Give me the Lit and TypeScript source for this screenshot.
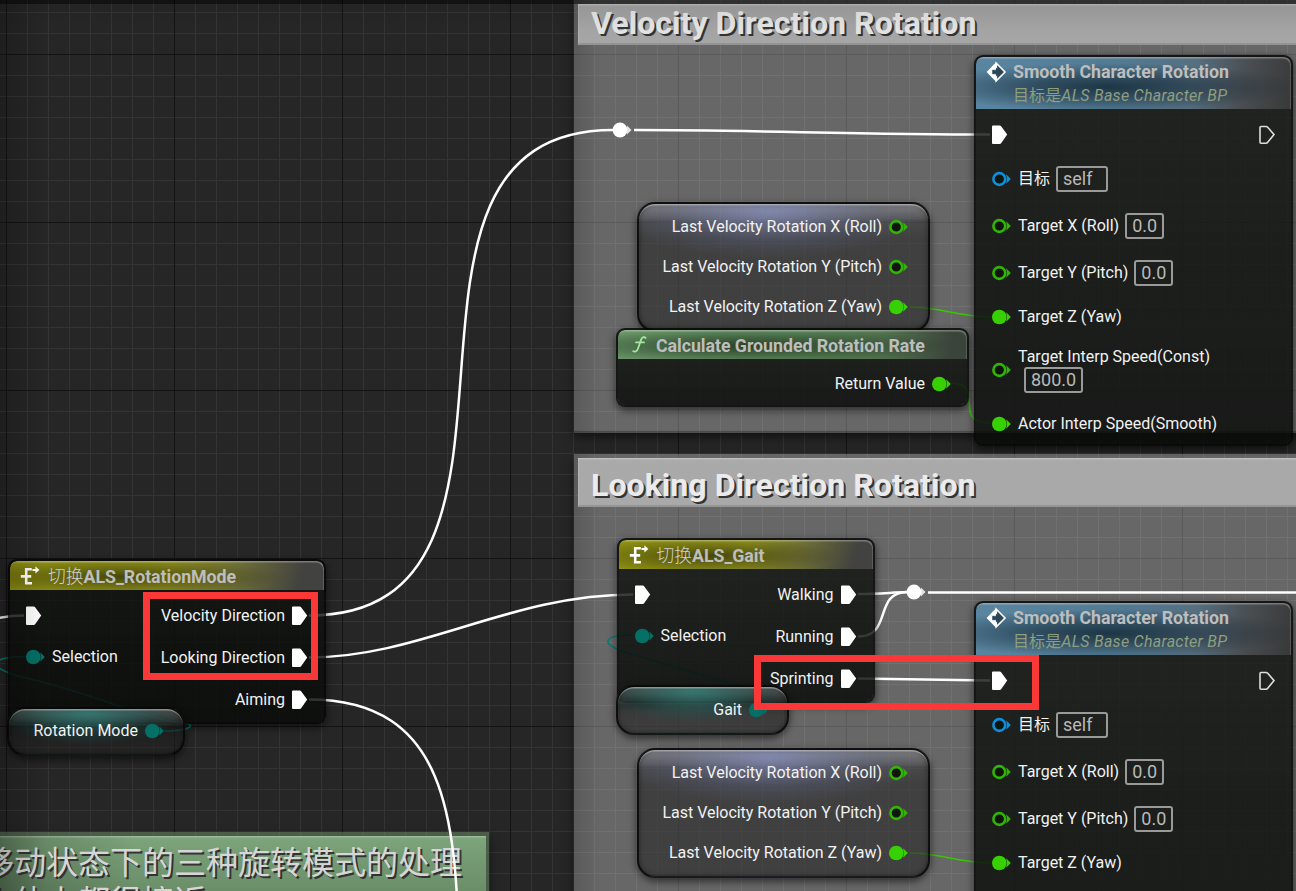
import { LitElement, html, svg, css, nothing } from "lit";
import { customElement, property } from "lit/decorators.js";
import { classMap } from "lit/directives/class-map.js";
import { styleMap } from "lit/directives/style-map.js";

type PinKind = "exec" | "float" | "object" | "enum";

interface Pin {
  kind: PinKind;
  label?: string;
  value?: string;
  wide?: boolean;
  stacked?: boolean;
  linked?: boolean;
  height: number;
}

interface NodeData {
  x: number;
  y: number;
  w: number;
  h: number;
  theme: "event" | "func" | "switch" | "rotator" | "enumvar";
  cjk?: string;
  title?: string;
  sub?: string;
  inputs: Pin[];
  outputs: Pin[];
}

const COLORS: Record<PinKind, string> = {
  exec: "#ffffff",
  float: "#37d003",
  object: "#0e8fdc",
  enum: "#046f64",
};

@customElement("bp-pin")
class BpPin extends LitElement {
  @property() kind: PinKind = "exec";
  @property({ type: Boolean }) linked = false;

  static styles = css`
    :host { display: block; flex: none; width: 19px; height: 20px; }
    svg { display: block; width: 19px; height: 20px; }
  `;

  render() {
    const c = COLORS[this.kind];
    if (this.kind === "exec") {
      return html`<svg viewBox="0 0 19 20">
        ${this.linked
          ? svg`<path d="M1 .6H7.6Q8.6 .6 9.3 1.4L15.2 9.6L9.3 18Q8.6 19 7.6 19H1Q0 19 0 18V1.6Q0 .6 1 .6Z" fill="#fff"/>`
          : svg`<path d="M2 1.5H7Q8 1.5 8.7 2.3L15 9.6L8.7 17.2Q8 18.2 7 18.2H2Q1 18.2 1 17.2V2.5Q1 1.5 2 1.5Z" fill="none" stroke="#dcdcdc" stroke-width="1.6"/>`}
      </svg>`;
    }
    const ring = this.kind === "float" ? "#31b505" : c;
    return html`<svg viewBox="0 0 19 20">
      <path d="M14.2 5.2L18.8 10L14.2 14.8Q15.6 10 14.2 5.2Z" fill=${this.linked ? c : ring}></path>
      ${this.linked
        ? svg`<circle cx="7.3" cy="10" r="7.3" fill=${c}/>`
        : svg`<circle cx="7.3" cy="10" r="5.9" fill="#101510" stroke=${ring} stroke-width="2.6"/>`}
    </svg>`;
  }
}

@customElement("bp-node")
class BpNode extends LitElement {
  @property({ attribute: false }) data!: NodeData;

  static styles = css`
    :host { display: block; }
    .node {
      box-sizing: border-box;
      height: 100%;
      border-radius: 9px;
      overflow: hidden;
      border: 2px solid rgba(5, 5, 5, 0.82);
      background: linear-gradient(rgba(16, 19, 16, 0.8), rgba(9, 11, 9, 0.84));
      background-clip: padding-box;
      color: #f2f2f2;
      font: 16px Roboto, "Noto Sans CJK SC", sans-serif;
      line-height: 20px;
      display: flex;
      flex-direction: column;
    }
    .wrap { height: 100%; border-radius: 10px; box-shadow: 0 3px 7px 1px rgba(0, 0, 0, 0.5); }
    .wrap.var { border-radius: 20px; }
    .head {
      box-sizing: border-box;
      flex: none;
      display: flex;
      align-items: flex-start;
      height: 29px;
      padding-left: 8px;
      border-radius: 7px 7px 0 0;
      box-shadow: inset -1px 2px 1px -0.5px rgba(255, 255, 255, 0.3);
      color: #bdbebd;
      font-weight: 700;
      font-size: 17.8px;
      letter-spacing: -0.05px;
      line-height: 29px;
      white-space: nowrap;
    }
    .head svg { flex: none; width: 24px; height: 24px; margin-top: 2px; }
    .event .head {
      height: 52px;
      line-height: 28px;
      padding: 1px 0 0 8px;
      background: radial-gradient(ellipse 60% 46% at 42% 58%, rgba(17, 37, 50, 0.8), rgba(17, 37, 50, 0.55) 40%, transparent),
        linear-gradient(100deg, #5a86a1 0%, #527a93 45%, #566f80 68%, #4a4f53 84%, #383838 100%);
    }
    .func .head {
      background: radial-gradient(ellipse 58% 60% at 38% 55%, rgba(20, 38, 22, 0.75), rgba(20, 38, 22, 0.4) 50%, transparent),
        linear-gradient(100deg, #6c9869 0%, #628f60 50%, #53744f 75%, #3b443b 95%);
    }
    .switch .head {
      background: radial-gradient(ellipse 52% 60% at 36% 55%, rgba(46, 46, 4, 0.75), rgba(46, 46, 4, 0.35) 50%, transparent),
        linear-gradient(105deg, #8e8f12 0%, #8f901e 50%, #6c6d38 72%, #424240 92%);
    }
    .titles { padding-left: 6px; }
    .switch .titles, .func .titles { padding-top: 0.5px; }
    .event .titles { padding-left: 5px; }
    .thin { font-weight: 300; letter-spacing: 0; color: #cfd0cf; }
    .sub {
      font-weight: 400;
      font-size: 16px;
      letter-spacing: 0.1px;
      line-height: 20px;
      color: #8f9e7e;
    }
    .sub i { font-style: italic; letter-spacing: 0.26px; }
    .body { flex: 1; display: flex; justify-content: space-between; }
    .switch .body { padding-top: 5px; }
    .func .body { padding-top: 0.5px; }
    .col { display: flex; flex-direction: column; }
    .row { display: flex; align-items: center; white-space: nowrap; flex: none; }
    .switch .row.exec bp-pin { position: relative; top: -0.5px; }
    .in .row { gap: 7px; padding-left: 16px; }
    .out { margin-left: auto; }
    .out .row { justify-content: flex-end; gap: 7px; padding-right: 16px; }
    .out .row.exec { padding-right: 13px; }
    .text { display: flex; align-items: center; gap: 6px; }
    .text.stacked { flex-direction: column; align-items: flex-start; gap: 0; }
    .stacked .box { margin-left: 6px; }
    .box {
      box-sizing: border-box;
      height: 26px;
      min-width: 39px;
      padding: 0 5px;
      border: 2px solid #999a99;
      border-radius: 3px;
      color: #b9bab9;
      font-size: 18px;
      line-height: 22px;
    }
    .box.wide { width: 52px; }
    .rotator .node, .enumvar .node {
      border-radius: 18px;
      background-clip: padding-box;
      box-shadow: inset 0 2px 1px -0.5px rgba(255, 255, 255, 0.42), inset 0 0 5px rgba(0, 0, 0, 0.5);
    }
    .rotator .node {
      background: radial-gradient(ellipse 55% 46px at 45% 8px, rgba(140, 150, 205, 0.65), rgba(110, 120, 170, 0.2) 65%, transparent),
        linear-gradient(rgba(140, 140, 140, 0.65), rgba(70, 70, 70, 0.55) 15px, rgba(46, 47, 46, 0.55) 17px, rgba(38, 38, 38, 0.6) 34px, rgba(38, 38, 38, 0.6));
    }
    .enumvar .node {
      background: radial-gradient(ellipse 55% 32px at 45% 4px, rgba(50, 140, 132, 0.7), rgba(20, 110, 100, 0.22) 70%, transparent),
        linear-gradient(rgba(140, 140, 140, 0.55), rgba(45, 45, 45, 0.55) 16px, rgba(25, 26, 25, 0.6) 18px, rgba(36, 36, 36, 0.6));
    }
    .rotator .body { padding-top: 3px; }
    .rotator .row { letter-spacing: -0.02px; }
    .enumvar .body { padding-top: 1px; }
    .rotator .out .row { padding-right: 20px; }
    .enumvar .out .row { padding-right: 19px; }
  `;

  private icon() {
    switch (this.data.theme) {
      case "event":
        return html`<svg viewBox="0 0 24 24">
          <path d="M12.3 3.2L21 12L12.3 20.8Z" fill="#2a4658" stroke="#fff" stroke-width="1.6"/>
          <path d="M12.3 2L2.6 12L12.3 22V16.6L11.3 14.2H8.4V9.8H11.3L12.3 7.4Z" fill="#fff"/>
          <path d="M8.4 10.2H12V7.4L16.4 12L12 16.6V13.8H8.4Z" fill="#2a4658"/>
        </svg>`;
      case "func":
        return html`<svg viewBox="0 0 24 24">
          <path d="M19.6 6C18.6 4.6 16.2 4.9 15.2 7.4C14 10.6 13 13.8 11.8 17C10.8 19.7 8.6 20.3 7.2 19.1M10 10.4H18" fill="none" stroke="#a3e8a0" stroke-width="1.8" stroke-linecap="round"/>
        </svg>`;
      default:
        return html`<svg viewBox="0 0 24 24">
          <path d="M13.8 6.3H8.2V20.3H14M2.8 13.4H13.2" fill="none" stroke="#fff" stroke-width="2.6"/>
          <path d="M14.4 5.9H17.4V3.2L21.4 6.9L17.4 10.6V7.9H14.4Z" fill="#fff"/>
        </svg>`;
    }
  }

  private row(p: Pin, out: boolean) {
    const pin = html`<bp-pin .kind=${p.kind} .linked=${!!p.linked}></bp-pin>`;
    const text = p.label
      ? html`<div class=${classMap({ text: true, stacked: !!p.stacked })}>
          <span>${p.label}</span>
          ${p.value ? html`<span class=${classMap({ box: true, wide: !!p.wide })}>${p.value}</span>` : nothing}
        </div>`
      : nothing;
    return html`<div class=${classMap({ row: true, exec: p.kind === "exec" })} style=${styleMap({ height: `${p.height}px` })}>
      ${out ? html`${text}${pin}` : html`${pin}${text}`}
    </div>`;
  }

  render() {
    const d = this.data;
    const isVar = d.theme === "rotator" || d.theme === "enumvar";
    return html`<div class="wrap ${d.theme} ${isVar ? "var" : ""}">
      <div class="node">
        ${d.title
          ? html`<div class="head">
              ${this.icon()}
              <div class="titles">
                <div>${d.cjk ? html`<span class="thin">${d.cjk}</span>` : nothing}${d.title}</div>
                ${d.sub ? html`<div class="sub">目标是<i>${d.sub}</i></div>` : nothing}
              </div>
            </div>`
          : nothing}
        <div class="body">
          ${d.inputs.length ? html`<div class="col in">${d.inputs.map((p) => this.row(p, false))}</div>` : nothing}
          <div class="col out">${d.outputs.map((p) => this.row(p, true))}</div>
        </div>
      </div>
    </div>`;
  }
}

const smooth = (y: number): NodeData => ({
  x: 974, y, w: 319, h: 391, theme: "event",
  title: "Smooth Character Rotation", sub: "ALS Base Character BP",
  inputs: [
    { kind: "exec", linked: true, height: 51 },
    { kind: "object", label: "目标", value: "self", wide: true, height: 38 },
    { kind: "float", label: "Target X (Roll)", value: "0.0", height: 56 },
    { kind: "float", label: "Target Y (Pitch)", value: "0.0", height: 38 },
    { kind: "float", label: "Target Z (Yaw)", linked: true, height: 49 },
    { kind: "float", label: "Target Interp Speed(Const)", value: "800.0", stacked: true, height: 58 },
    { kind: "float", label: "Actor Interp Speed(Smooth)", linked: true, height: 49 },
  ],
  outputs: [{ kind: "exec", height: 51 }],
});

const velocity = (y: number): NodeData => ({
  x: 637, y, w: 293, h: 130, theme: "rotator", inputs: [],
  outputs: [
    { kind: "float", label: "Last Velocity Rotation X (Roll)", height: 40 },
    { kind: "float", label: "Last Velocity Rotation Y (Pitch)", height: 40 },
    { kind: "float", label: "Last Velocity Rotation Z (Yaw)", linked: true, height: 40 },
  ],
});

const NODES: NodeData[] = [
  velocity(202),
  {
    x: 616, y: 328, w: 353, h: 79, theme: "func", title: "Calculate Grounded Rotation Rate", inputs: [],
    outputs: [{ kind: "float", label: "Return Value", linked: true, height: 48 }],
  },
  smooth(55),
  {
    x: 8, y: 559, w: 318, h: 165, theme: "switch", cjk: "切换", title: "ALS_RotationMode",
    inputs: [
      { kind: "exec", linked: true, height: 42 },
      { kind: "enum", label: "Selection", linked: true, height: 40 },
    ],
    outputs: [
      { kind: "exec", label: "Velocity Direction", linked: true, height: 42 },
      { kind: "exec", label: "Looking Direction", linked: true, height: 42 },
      { kind: "exec", label: "Aiming", linked: true, height: 42 },
    ],
  },
  {
    x: 7, y: 707, w: 178, h: 49, theme: "enumvar", inputs: [],
    outputs: [{ kind: "enum", label: "Rotation Mode", linked: true, height: 41 }],
  },
  {
    x: 616.5, y: 538, w: 258, h: 165, theme: "switch", cjk: "切换", title: "ALS_Gait",
    inputs: [
      { kind: "exec", linked: true, height: 42 },
      { kind: "enum", label: "Selection", linked: true, height: 40 },
    ],
    outputs: [
      { kind: "exec", label: "Walking", linked: true, height: 42 },
      { kind: "exec", label: "Running", linked: true, height: 42 },
      { kind: "exec", label: "Sprinting", linked: true, height: 42 },
    ],
  },
  {
    x: 616, y: 685, w: 173, h: 50, theme: "enumvar", inputs: [],
    outputs: [{ kind: "enum", label: "Gait", linked: true, height: 43 }],
  },
  smooth(601),
  velocity(748),
];

@customElement("app-root")
class AppRoot extends LitElement {
  static styles = css`
    :host { display: block; }
    .graph {
      position: relative;
      width: 1296px;
      height: 891px;
      overflow: hidden;
      background-color: #262626;
      background-image: linear-gradient(to right, #141414 1px, transparent 1px),
        linear-gradient(#141414 1px, transparent 1px),
        linear-gradient(to right, #343434 1px, transparent 1px),
        linear-gradient(#343434 1px, transparent 1px);
      background-size: 168px 168px, 168px 168px, 21px 21px, 21px 21px;
      background-position: 6px 0, 0 54px, 6px 0, 0 12px;
      font-family: Roboto, "Noto Sans CJK SC", sans-serif;
    }
    .comment {
      position: absolute;
      box-sizing: border-box;
      padding: 4px 0 0 4px;
      background: linear-gradient(to right, rgba(0, 0, 0, 0.13), transparent 26px), rgba(255, 255, 255, 0.3);
      box-shadow: inset 0 -3px 1px -1px rgba(0, 0, 0, 0.3), 0 5px 9px rgba(0, 0, 0, 0.5);
    }
    .c1 { left: 574px; top: 0; width: 730px; height: 433px; }
    .c2 { left: 574px; top: 454px; width: 730px; height: 460px; }
    .c3 { left: -30px; top: 832px; width: 519px; height: 90px; background: rgba(122, 160, 118, 0.45); }
    .bar {
      box-sizing: border-box;
      padding-left: 13px;
      background: #a9a9a9;
      box-shadow: inset 0 1.5px 1px rgba(255, 255, 255, 0.25), inset 1px 0 1px rgba(255, 255, 255, 0.15),
        inset 0 -2px 1px rgba(0, 0, 0, 0.12);
      color: #ebebeb;
      font-weight: 700;
      font-size: 32.15px;
      white-space: nowrap;
      text-shadow: 2px 2px 0 #333;
    }
    .c1 .bar { height: 41px; line-height: 39px; background: linear-gradient(#9d9d9d, #a7a7a7); color: #e2e2e2; }
    .c2 .bar { height: 49px; line-height: 55px; }
    .c3 .bar {
      width: 512px;
      height: 86px;
      padding: 8px 0 0 8px;
      background: linear-gradient(to right, rgba(0, 0, 0, 0.28), transparent 160px), linear-gradient(#7da47b, #688c67 60px);
      color: #d6d6d6;
      font-weight: 400;
      font-size: 32px;
      line-height: 39px;
    }
    .wires, .shade, .knots { position: absolute; inset: 0; width: 1296px; height: 891px; pointer-events: none; }
    .place { position: absolute; }
    .shade {
      background: linear-gradient(rgba(0, 0, 0, 0.5), rgba(0, 0, 0, 0.5)) 0 0 / 100% 4px no-repeat,
        linear-gradient(to right, rgba(0, 0, 0, 0.2), transparent 46px),
        linear-gradient(rgba(0, 0, 0, 0.06), transparent 30px);
    }
    .mark { position: absolute; box-sizing: border-box; border: 7px solid #fb3838; }
    .m1 { left: 143px; top: 592px; width: 175px; height: 88px; }
    .m2 { left: 754px; top: 655px; width: 285px; height: 55px; }
  `;

  private knot(x: number, y: number) {
    return svg`<path d="M${x + 7} ${y - 4.5}L${x + 11.5} ${y}L${x + 7} ${y + 4.5}Z" fill="#e4e4e4"/>
      <circle cx=${x} cy=${y} r="7.4" fill="#fff"/>`;
  }

  render() {
    return html`<div class="graph">
      <div class="comment c1"><div class="bar">Velocity Direction Rotation</div></div>
      <div class="comment c2"><div class="bar">Looking Direction Rotation</div></div>
      <div class="comment c3"><div class="bar">移动状态下的三种旋转模式的处理<br />大体上都很接近</div></div>
      <svg class="wires" viewBox="0 0 1296 891" fill="none" stroke="#fff" stroke-width="2.5">
        <path d="M309 615.5C577 615.5 345 130 613 130" />
        <path d="M309 657.5C420 657.5 510 594.5 633 594.5" />
        <path d="M309 699.5C589 699.5 330 1190 610 1190" />
        <path d="M-6 619C4 616.5 10 615.5 24 615.5" />
        <path d="M634 130C750 130 860 134.5 990 134.5" />
        <path d="M858 594C880 594 890 592.5 907 592" />
        <path d="M858 636.5C893 636.5 873 592.5 907 592" />
        <path d="M928 592.5H1296" />
        <path d="M858 678.5L990 680.5" />
        <g stroke="#37c805" stroke-width="1.6">
          <path d="M910 307C940 307 960 317 991 317" />
          <path d="M910 853C940 853 960 863 991 863" />
          <path d="M950 383C988 383 950 423 990 423" />
        </g>
        <g stroke="#087a6e" stroke-width="1.6">
          <path d="M26 656.5C-14 656.5 -14 669 30 679C100 695 150 722 185 723C195 724 193 731 164 731" />
          <path d="M634 635C602 635 600 644 625 652C665 664 720 682 760 690" />
        </g>
      </svg>
      ${NODES.map(
        (n) => html`<bp-node
          class="place"
          .data=${n}
          style=${styleMap({ left: `${n.x}px`, top: `${n.y}px`, width: `${n.w}px`, height: `${n.h}px` })}
        ></bp-node>`
      )}
      <svg class="knots" viewBox="0 0 1296 891">${this.knot(620, 130)}${this.knot(914, 592)}</svg>
      <div class="shade"></div>
      <div class="mark m1"></div>
      <div class="mark m2"></div>
    </div>`;
  }
}
